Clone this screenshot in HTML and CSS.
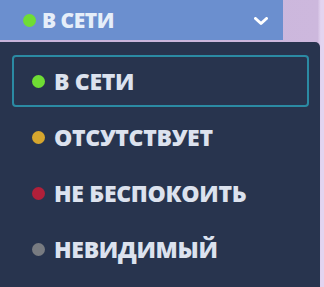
FILE: index.html
```html
<!DOCTYPE html>
<html>
<head>
<meta charset="utf-8">
<link rel="stylesheet" href="styles.css">
</head>
<body>
<div class="page">
  <div class="bar">
    <span class="dot green"></span>
    <span class="bar-label">В СЕТИ</span>
    <svg class="chevron" width="14" height="9" viewBox="0 0 14 9"><path d="M1.5 1.5 L7 6.5 L12.5 1.5" fill="none" stroke="#ffffff" stroke-width="3" stroke-linecap="round" stroke-linejoin="round"/></svg>
  </div>
  <div class="menu">
    <div class="item selected"><span class="dot green"></span><span class="label">В СЕТИ</span></div>
    <div class="item"><span class="dot yellow"></span><span class="label">ОТСУТСТВУЕТ</span></div>
    <div class="item"><span class="dot red"></span><span class="label">НЕ БЕСПОКОИТЬ</span></div>
    <div class="item"><span class="dot grey"></span><span class="label">НЕВИДИМЫЙ</span></div>
  </div>
</div>
</body>
</html>
```
FILE: styles.css
```css
html, body {
  margin: 0;
  padding: 0;
}
body {
  width: 324px;
  height: 287px;
  overflow: hidden;
  background: linear-gradient(90deg, #c7b3da 0%, #cdb8dd 98%, #e3d4f0 99%);
  font-family: "Open Sans", "DejaVu Sans", sans-serif;
  font-weight: 800;
}
.page {
  display: flex;
  flex-direction: column;
  height: 287px;
}
.bar {
  width: 283px;
  height: 40px;
  box-sizing: border-box;
  background: #6b8fcf;
  display: flex;
  align-items: center;
  padding-left: 23px;
  padding-right: 15px;
  color: #e6eef9;
}
.bar-label {
  font-size: 21px;
  margin-left: 6px;
  letter-spacing: -0.5px;
  line-height: 1;
}
.chevron {
  margin-left: auto;
  margin-top: 2px;
}
.menu {
  margin-top: 2px;
  width: 320px;
  flex: 1;
  box-sizing: border-box;
  background: #28344e;
  border-top-right-radius: 5px;
  padding: 13px 11px 0 12px;
  display: flex;
  flex-direction: column;
  gap: 4px;
}
.item {
  height: 52px;
  box-sizing: border-box;
  border: 2px solid transparent;
  border-radius: 4px;
  display: flex;
  align-items: center;
  padding-left: 18px;
  color: #dce2ee;
}
.item.selected {
  border-color: #2b8aa3;
}
.label {
  font-size: 23px;
  margin-left: 9px;
  letter-spacing: -0.3px;
  line-height: 1;
}
.dot {
  width: 13px;
  height: 13px;
  border-radius: 50%;
  flex: none;
}
.green { background: #6fdd34; }
.yellow { background: #d6a62e; }
.red { background: #b1203a; }
.grey { background: #787b81; }
```
